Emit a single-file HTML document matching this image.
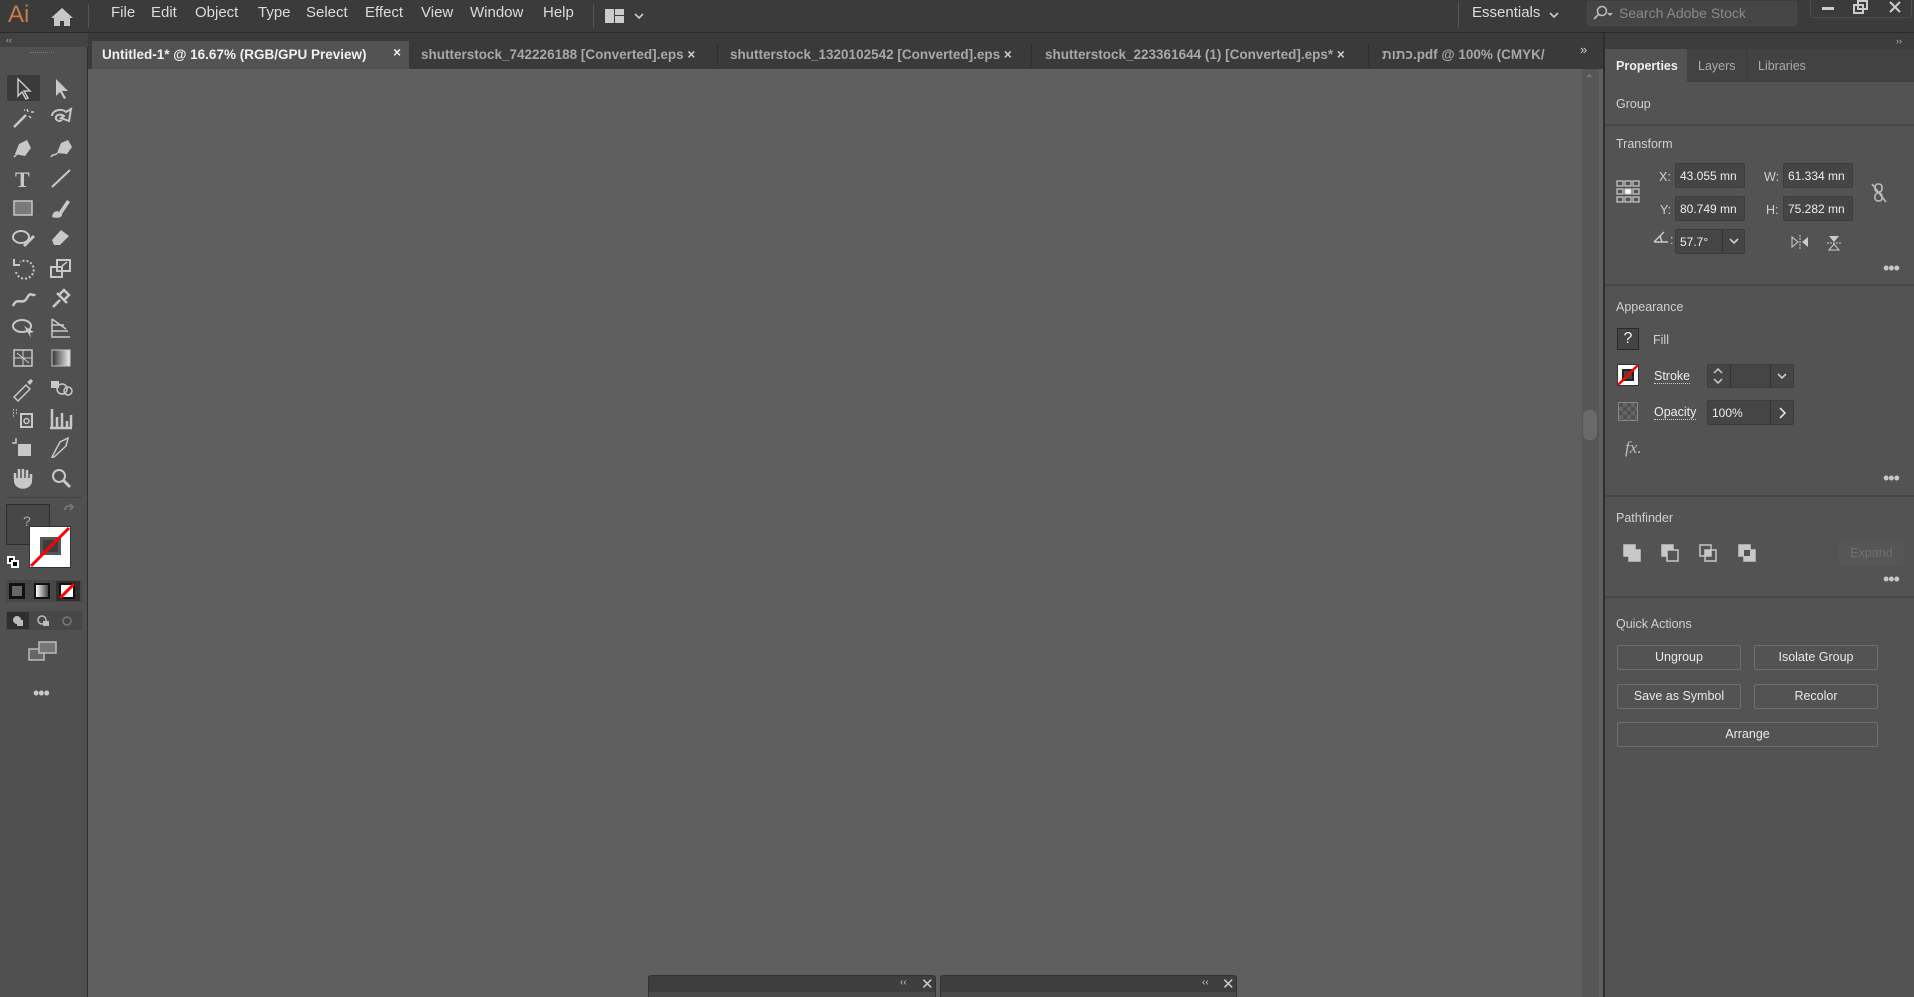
<!DOCTYPE html>
<html><head><meta charset="utf-8"><style>
*{margin:0;padding:0;box-sizing:border-box}
body{width:1914px;height:997px;overflow:hidden;background:#5f5f5f;font-family:"Liberation Sans",sans-serif;position:relative;color:#d6d6d6}
.a{position:absolute}
.menu{left:0;top:0;width:1914px;height:33px;background:#3b3b3b;border-bottom:1px solid #2a2a2a}
.mi{top:4px;font-size:15px;color:#dcdcdc}
.tb{left:0;top:33px;width:88px;height:964px;background:#505050;border-right:1px solid #2e2e2e}
.tabs{left:88px;top:33px;width:1515px;height:36px;background:#3a3a3a}
.tab{top:41px;height:28px;font-size:13.5px;font-weight:bold;color:#a8a8a8;padding:6px 10px;white-space:nowrap}
.rp{left:1603px;top:33px;width:311px;height:964px;background:#535353;border-left:2px solid #2e2e2e}
.lbl{font-size:12.5px;color:#d0d0d0;white-space:nowrap}
.fld{background:#454545;border:1px solid #3c3c3c;border-radius:2px;font-size:12px;color:#eee;padding:5px 4px;white-space:nowrap;overflow:hidden;line-height:14px}
.btn{border:1px solid #6e6e6e;border-radius:2px;font-size:12.5px;color:#e8e8e8;text-align:center;line-height:23px}
.div{left:1605px;width:309px;height:2px;background:#474747}
.dots{font-size:18px;color:#c8c8c8;letter-spacing:-1px;line-height:10px}
</style></head><body>
<div class="a menu"></div>
<div class="a" style="left:8px;top:1px;font-size:24px;color:#c97a4a">Ai</div>
<svg class="a" style="left:50px;top:7px" width="24" height="20" viewBox="0 0 24 20"><path d="M12 1L1 11h3v8h6v-5h4v5h6v-8h3z" fill="#c8c8c8"/></svg>
<div class="a" style="left:88px;top:4px;width:1px;height:24px;background:#555"></div>
<div class="a mi" style="left:111px">File</div><div class="a mi" style="left:151px">Edit</div><div class="a mi" style="left:195px">Object</div><div class="a mi" style="left:258px">Type</div><div class="a mi" style="left:306px">Select</div><div class="a mi" style="left:365px">Effect</div><div class="a mi" style="left:421px">View</div><div class="a mi" style="left:470px">Window</div><div class="a mi" style="left:543px">Help</div>
<div class="a" style="left:593px;top:4px;width:1px;height:24px;background:#555"></div>
<svg class="a" style="left:604px;top:7px" width="42" height="18"><rect x="1" y="2" width="9" height="14" fill="#ccc"/><rect x="11" y="2" width="9" height="6" fill="#ccc"/><rect x="11" y="9" width="9" height="7" fill="#ccc"/><path d="M31 7l4 4 4-4" stroke="#ccc" fill="none" stroke-width="1.6"/></svg>
<div class="a" style="left:1458px;top:2px;width:1px;height:26px;background:#555"></div>
<div class="a mi" style="left:1472px">Essentials</div>
<svg class="a" style="left:1548px;top:10px" width="12" height="10"><path d="M2 3l4 4 4-4" stroke="#ccc" fill="none" stroke-width="1.6"/></svg>
<div class="a" style="left:1587px;top:1px;width:210px;height:25px;background:#454545;border-radius:3px;border:1px solid #4a4a4a"></div>
<svg class="a" style="left:1592px;top:5px" width="22" height="16"><circle cx="10" cy="6" r="4.5" stroke="#bbb" fill="none" stroke-width="1.6"/><path d="M7 9l-5 5" stroke="#bbb" stroke-width="1.8"/><path d="M15 8l3 3 3-3z" fill="#bbb"/></svg>
<div class="a" style="left:1619px;top:5px;font-size:14px;color:#8a8a8a">Search Adobe Stock</div>
<div class="a" style="left:1810px;top:0;width:102px;height:18px;border:1px solid #4e4e4e;border-top:none;border-radius:0 0 4px 4px"></div>
<div class="a" style="left:1822px;top:7px;width:12px;height:3px;background:#ccc"></div>
<svg class="a" style="left:1853px;top:0" width="16" height="14"><rect x="1" y="5" width="9" height="8" stroke="#ccc" fill="none" stroke-width="2"/><rect x="5" y="1" width="9" height="8" stroke="#ccc" fill="none" stroke-width="2"/></svg>
<svg class="a" style="left:1888px;top:1px" width="14" height="12"><path d="M2 1l10 10M12 1L2 11" stroke="#ccc" stroke-width="2"/></svg>

<div class="a tb"></div>
<div class="a" style="left:0;top:33px;width:88px;height:14px;background:#424242"></div>
<div class="a" style="left:6px;top:35px;font-size:9px;color:#aaa">‹‹</div>
<div class="a" style="left:30px;top:52px;width:24px;height:3px;border-top:1px dotted #777"></div>
<div class="a" style="left:7px;top:75px;width:33px;height:26px;background:#3a3a3a;border-radius:2px"></div>
<svg class="a" style="left:0;top:0" width="88" height="500" fill="#c8c8c8" stroke="#c8c8c8">
<g transform="translate(23,88)"><path d="M-5-9v17l4-4 4 7 2-1-4-7h6z" fill="none" stroke-width="1.5"/></g>
<g transform="translate(61,88)"><path d="M-5-9v17l4-4 4 7 2-1-4-7h6z" stroke="none"/></g>
<g transform="translate(23,118)"><path d="M-9 9l12-12" stroke-width="2.5" fill="none"/><path d="M4-9l1 3M8-6l3 0M6-2l2 2M1-8h1" stroke-width="1.5"/></g>
<g transform="translate(61,118)"><path d="M-9-2c0-6 10-8 14-4l5-3-2 12-8-3 3-2c-2-2-7-2-8 1s3 5 6 3" fill="none" stroke-width="2"/></g>
<g transform="translate(23,148)"><path d="M-8 6l4-10 8-4 4 8-6 8z M-9 9l4-4" stroke="none"/><path d="M-9 9l5-5" stroke-width="1.5"/></g>
<g transform="translate(61,148)"><path d="M-4 5l4-10 7-3 4 7-5 7z" stroke="none"/><path d="M-10 9c2-4 5-1 6-4" fill="none" stroke-width="1.5"/></g>
<g transform="translate(23,178)"><text x="-8" y="9" font-size="22" font-weight="bold" font-family="Liberation Serif" stroke="none">T</text></g>
<g transform="translate(61,178)"><path d="M-9 9l18-17" stroke-width="2" fill="none"/></g>
<g transform="translate(23,208)"><rect x="-9" y="-7" width="18" height="14" fill="#7a7a7a" stroke-width="1.5"/></g>
<g transform="translate(61,208)"><path d="M-9 9c1-6 5-7 7-5l8-12 3 2-8 12c1 3-4 5-10 3z" stroke="none"/></g>
<g transform="translate(23,238)"><ellipse cx="-2" cy="-1" rx="8" ry="6" fill="none" stroke-width="2"/><path d="M1 8l10-10" stroke-width="3"/></g>
<g transform="translate(61,238)"><path d="M-9 2l9-10 8 6-9 9h-6z" stroke="none"/></g>
<g transform="translate(23,268)"><path d="M-7 4a9 9 0 1 0 4-10" fill="none" stroke-width="2" stroke-dasharray="2 2"/><path d="M-9-9v6h6" fill="none" stroke-width="2"/></g>
<g transform="translate(61,268)"><rect x="-10" y="-1" width="11" height="10" fill="none" stroke-width="2"/><rect x="-4" y="-8" width="13" height="11" fill="none" stroke-width="2"/><path d="M1-2l5-4" stroke-width="1.5"/></g>
<g transform="translate(23,298)"><path d="M-10 8c4-10 10 0 14-8s6 0 8-4" fill="none" stroke-width="2.5"/></g>
<g transform="translate(61,298)"><path d="M-8 9l7-7m-3-7l10 10m-8-8l5-5 5 5-5 5" stroke-width="2.5" fill="none"/></g>
<g transform="translate(23,328)"><ellipse cx="-1" cy="-2" rx="9" ry="6" fill="none" stroke-width="2"/><path d="M1-2l10 6-4 1 1 5z" stroke="none"/></g>
<g transform="translate(61,328)"><path d="M-9-9v18h18M-9-9l14 10M-9-3h12M-9 3h16" fill="none" stroke-width="1.5"/></g>
<g transform="translate(23,358)"><rect x="-9" y="-8" width="18" height="16" fill="none" stroke-width="1.5"/><path d="M-9 0h18M0-8v16M-6-5l12 10" fill="none" stroke-width="1"/></g>
<defs><linearGradient id="g"><stop offset="0" stop-color="#333"/><stop offset="1" stop-color="#eee"/></linearGradient></defs>
<g transform="translate(61,358)"><rect x="-9" y="-8" width="18" height="16" fill="url(#g)" stroke-width="1"/></g>
<g transform="translate(23,388)"><path d="M-9 9l12-12 4 4-12 12z" fill="none" stroke-width="1.5"/><path d="M4-6l4-3 2 2-3 4z" stroke="none"/></g>
<g transform="translate(61,388)"><rect x="-10" y="-7" width="8" height="7" stroke="none"/><circle cx="1" cy="1" r="5" fill="none" stroke-width="1.5"/><circle cx="7" cy="3" r="4" fill="none" stroke-width="1.5"/></g>
<g transform="translate(23,418)"><rect x="-2" y="-4" width="11" height="13" fill="none" stroke-width="2"/><circle cx="3.5" cy="3" r="2.5" fill="none" stroke-width="1.5"/><path d="M-10-8h1M-7-8h1M-10-5h1M-7-5h1M-10-2h1" stroke-width="1.5"/></g>
<g transform="translate(61,418)"><path d="M-9 9v-18M-4 9v-10M1 9v-14M6 9v-6M10 9v-12M-11 10h22" stroke-width="2.5" fill="none"/></g>
<g transform="translate(23,448)"><path d="M-7-10v5h-4" fill="none" stroke-width="1.5"/><path d="M-5-4h13v12h-13z" stroke="none"/></g>
<g transform="translate(61,448)"><path d="M-9 9l8-15 8-4-2 8-12 11z" fill="none" stroke-width="1.5"/></g>
<g transform="translate(23,478)"><path d="M-9 0h18v4c-2 9-16 9-18 0z" stroke="none"/><path d="M-8 1v-6M-4 0v-9M0 0v-9M4 0v-8M8 1v-5" stroke-width="2.5" fill="none"/></g>
<g transform="translate(61,478)"><circle cx="-2" cy="-2" r="6" fill="none" stroke-width="2"/><path d="M2 2l7 7" stroke-width="3"/></g>
</svg>
<div class="a" style="left:6px;top:497px;width:76px;height:1px;background:#444"></div>
<div class="a" style="left:6px;top:504px;width:44px;height:41px;background:#474747;border:1px solid #2e2e2e"></div>
<div class="a" style="left:23px;top:513px;font-size:14px;color:#9ab">?</div>
<div class="a" style="left:29px;top:526px;width:42px;height:42px;background:#fff;border:1px solid #333"></div>
<div class="a" style="left:40px;top:537px;width:21px;height:18px;background:#3d3d3d;border:3px solid #555"></div>
<svg class="a" style="left:29px;top:526px" width="42" height="42"><path d="M2 40L40 2" stroke="#f00" stroke-width="3"/></svg>
<svg class="a" style="left:62px;top:503px" width="14" height="12"><path d="M3 7c0-4 4-5 8-3M8 1l3 3-3 3" stroke="#777" fill="none" stroke-width="1.8"/></svg>
<div class="a" style="left:7px;top:556px;width:8px;height:8px;border:2px solid #fff;background:#000"></div>
<div class="a" style="left:11px;top:560px;width:8px;height:8px;border:2px solid #fff;background:#000"></div>
<div class="a" style="left:6px;top:580px;width:76px;height:22px;background:#474747;border-radius:2px"></div>
<div class="a" style="left:9px;top:583px;width:16px;height:16px;border:3px solid #111;background:#666"></div>
<div class="a" style="left:34px;top:583px;width:16px;height:16px;border:2px solid #111;background:linear-gradient(90deg,#fff,#444)"></div>
<div class="a" style="left:56px;top:581px;width:24px;height:20px;background:#2f2f2f"></div>
<div class="a" style="left:59px;top:583px;width:16px;height:16px;border:2px solid #111;background:#fff"></div>
<svg class="a" style="left:59px;top:583px" width="16" height="16"><path d="M1 15L15 1" stroke="#f00" stroke-width="3"/></svg>
<div class="a" style="left:6px;top:611px;width:76px;height:19px;background:#474747;border-radius:2px"></div>
<div class="a" style="left:7px;top:612px;width:22px;height:17px;background:#2f2f2f"></div>
<svg class="a" style="left:8px;top:612px" width="75" height="18" fill="#bbb"><circle cx="9" cy="8" r="4"/><rect x="9" y="8" width="6" height="6"/><circle cx="34" cy="8" r="4" fill="none" stroke="#bbb" stroke-width="1.5"/><rect x="35" y="9" width="6" height="5"/><circle cx="59" cy="9" r="4" fill="none" stroke="#777" stroke-width="1.5"/></svg>
<svg class="a" style="left:27px;top:640px" width="32" height="22"><rect x="2" y="9" width="15" height="11" fill="#666" stroke="#bbb" stroke-width="1.5"/><rect x="12" y="2" width="17" height="11" fill="#777" stroke="#bbb" stroke-width="1.5"/></svg>
<div class="a dots" style="left:33px;top:688px">•••</div>

<div class="a tabs"></div>
<div class="a tab" style="left:92px;width:317px;background:#535353;color:#f0f0f0">Untitled-1* @ 16.67% (RGB/GPU Preview)<span style="position:absolute;right:8px;top:4px">×</span></div>
<div class="a tab" style="left:411px">shutterstock_742226188 [Converted].eps <span style="color:#ccc">×</span></div>
<div class="a" style="left:717px;top:44px;width:1px;height:22px;background:#2c2c2c"></div>
<div class="a tab" style="left:720px">shutterstock_1320102542 [Converted].eps <span style="color:#ccc">×</span></div>
<div class="a" style="left:1031px;top:44px;width:1px;height:22px;background:#2c2c2c"></div>
<div class="a tab" style="left:1035px">shutterstock_223361644 (1) [Converted].eps* <span style="color:#ccc">×</span></div>
<div class="a" style="left:1368px;top:44px;width:1px;height:22px;background:#2c2c2c"></div>
<div class="a tab" style="left:1372px;width:190px;overflow:hidden;font-family:'Liberation Sans','Noto Sans CJK SC',sans-serif">כתות.pdf @ 100% (CMYK/</div>
<div class="a" style="left:1580px;top:42px;font-size:13px;color:#ccc">»</div>
<div class="a" style="left:1582px;top:69px;width:17px;height:928px;background:#565656"></div>
<div class="a" style="left:1583px;top:410px;width:14px;height:30px;background:#6a6a6a;border-radius:6px"></div>
<div class="a" style="left:1585px;top:74px;font-size:10px;color:#999">⌃</div>

<div class="a" style="left:648px;top:975px;width:288px;height:22px;background:#3e3e3e;border-radius:3px 3px 0 0;border:1px solid #333"></div>
<div class="a" style="left:940px;top:975px;width:297px;height:22px;background:#3e3e3e;border-radius:3px 3px 0 0;border:1px solid #333"></div>
<div class="a" style="left:900px;top:977px;font-size:10px;color:#ccc">‹‹</div><div class="a" style="left:921px;top:975px;font-size:15px;color:#ccc">✕</div>
<div class="a" style="left:1202px;top:977px;font-size:10px;color:#ccc">‹‹</div><div class="a" style="left:1222px;top:975px;font-size:15px;color:#ccc">✕</div>
<div class="a" style="left:649px;top:992px;width:286px;height:5px;background:#4a4a4a"></div>
<div class="a" style="left:941px;top:992px;width:295px;height:5px;background:#4a4a4a"></div>

<div class="a rp"></div>
<div class="a" style="left:1605px;top:33px;width:309px;height:16px;background:#3c3c3c"></div>
<div class="a" style="left:1896px;top:36px;font-size:9px;color:#bbb">››</div>
<div class="a" style="left:1605px;top:49px;width:309px;height:33px;background:#424242"></div>
<div class="a" style="left:1605px;top:49px;width:82px;height:33px;background:#535353"></div>
<div class="a lbl" style="left:1616px;top:59px;font-weight:bold;color:#eee">Properties</div>
<div class="a lbl" style="left:1698px;top:59px;color:#aaa">Layers</div>
<div class="a" style="left:1746px;top:49px;width:1px;height:33px;background:#3a3a3a"></div>
<div class="a lbl" style="left:1758px;top:59px;color:#aaa">Libraries</div>
<div class="a lbl" style="left:1616px;top:97px">Group</div>
<div class="a div" style="top:124px"></div>
<div class="a lbl" style="left:1616px;top:137px">Transform</div>
<svg class="a" style="left:1616px;top:180px" width="26" height="24" fill="none" stroke="#ccc" stroke-width="1.2"><rect x="1" y="1" width="6" height="5"/><rect x="9" y="1" width="6" height="5"/><rect x="17" y="1" width="6" height="5"/><rect x="1" y="9" width="6" height="5"/><rect x="9" y="9" width="6" height="5" fill="#fff"/><rect x="17" y="9" width="6" height="5"/><rect x="1" y="17" width="6" height="5"/><rect x="9" y="17" width="6" height="5"/><rect x="17" y="17" width="6" height="5"/></svg>
<div class="a lbl" style="left:1659px;top:170px">X:</div>
<div class="a fld" style="left:1675px;top:163px;width:70px;height:25px">43.055 mn</div>
<div class="a lbl" style="left:1764px;top:170px">W:</div>
<div class="a fld" style="left:1783px;top:163px;width:70px;height:25px">61.334 mn</div>
<div class="a lbl" style="left:1660px;top:203px">Y:</div>
<div class="a fld" style="left:1675px;top:196px;width:70px;height:25px">80.749 mn</div>
<div class="a lbl" style="left:1766px;top:203px">H:</div>
<div class="a fld" style="left:1783px;top:196px;width:70px;height:25px">75.282 mn</div>
<svg class="a" style="left:1870px;top:182px" width="18" height="22" fill="none" stroke="#bbb" stroke-width="1.6"><rect x="5" y="2" width="7" height="8" rx="3"/><rect x="5" y="11" width="7" height="8" rx="3"/><path d="M2 2l14 18"/></svg>
<svg class="a" style="left:1652px;top:230px" width="20" height="14" fill="none" stroke="#ccc" stroke-width="1.4"><path d="M2 12h14M2 12l10-10M8 6l2 6"/></svg>
<div class="a lbl" style="left:1670px;top:233px">:</div>
<div class="a fld" style="left:1675px;top:229px;width:70px;height:25px">57.7°</div>
<div class="a" style="left:1722px;top:230px;width:1px;height:23px;background:#333"></div>
<svg class="a" style="left:1728px;top:236px" width="12" height="10"><path d="M2 3l4 4 4-4" stroke="#ccc" fill="none" stroke-width="1.6"/></svg>
<svg class="a" style="left:1790px;top:234px" width="20" height="16" fill="#ccc"><path d="M2 3l6 5-6 5z" fill="none" stroke="#ccc"/><path d="M18 3l-6 5 6 5z"/><path d="M10 1v14" stroke="#ccc" stroke-dasharray="2 1"/></svg>
<svg class="a" style="left:1826px;top:234px" width="16" height="18" fill="#ccc"><path d="M3 2h10l-5 6z"/><path d="M3 16h10l-5-6z" fill="none" stroke="#ccc"/><path d="M1 9h14" stroke="#ccc" stroke-dasharray="2 1"/></svg>
<div class="a dots" style="left:1883px;top:263px">•••</div>
<div class="a div" style="top:284px"></div>
<div class="a lbl" style="left:1616px;top:300px">Appearance</div>
<div class="a" style="left:1617px;top:328px;width:22px;height:22px;border:1px solid #2a2a2a;background:#444;color:#eee;font-size:16px;text-align:center;line-height:20px">?</div>
<div class="a lbl" style="left:1653px;top:333px">Fill</div>
<div class="a" style="left:1617px;top:364px;width:22px;height:22px;background:#fff;border:1px solid #333"></div>
<div class="a" style="left:1622px;top:369px;width:12px;height:12px;background:#444;border:2px solid #222"></div>
<svg class="a" style="left:1617px;top:364px" width="22" height="22"><path d="M1 21L21 1" stroke="#f00" stroke-width="2.5"/></svg>
<div class="a lbl" style="left:1654px;top:370px;color:#eee;border-bottom:1px dotted #ccc;line-height:13px">Stroke</div>
<div class="a fld" style="left:1707px;top:364px;width:87px;height:24px"></div>
<div class="a" style="left:1730px;top:365px;width:1px;height:22px;background:#333"></div>
<div class="a" style="left:1770px;top:365px;width:1px;height:22px;background:#333"></div>
<svg class="a" style="left:1711px;top:366px" width="14" height="20" fill="none" stroke="#ccc" stroke-width="1.5"><path d="M3 7l4-4 4 4M3 13l4 4 4-4"/></svg>
<svg class="a" style="left:1776px;top:371px" width="12" height="10"><path d="M2 3l4 4 4-4" stroke="#ccc" fill="none" stroke-width="1.6"/></svg>
<div class="a" style="left:1618px;top:402px;width:20px;height:19px;border:1px solid #888;background:repeating-conic-gradient(#666 0 25%,#505050 0 50%) 0 0/8px 8px"></div>
<div class="a lbl" style="left:1654px;top:406px;color:#eee;border-bottom:1px dotted #ccc;line-height:13px">Opacity</div>
<div class="a fld" style="left:1707px;top:400px;width:87px;height:25px">100%</div>
<div class="a" style="left:1770px;top:401px;width:1px;height:23px;background:#333"></div>
<svg class="a" style="left:1777px;top:406px" width="10" height="14"><path d="M3 2l5 5-5 5" stroke="#ddd" fill="none" stroke-width="1.6"/></svg>
<div class="a" style="left:1625px;top:438px;font-size:17px;font-style:italic;color:#bbb;font-family:'Liberation Serif',serif">fx.</div>
<div class="a dots" style="left:1883px;top:473px">•••</div>
<div class="a div" style="top:495px"></div>
<div class="a lbl" style="left:1616px;top:511px">Pathfinder</div>
<svg class="a" style="left:1622px;top:543px" width="150" height="22" fill="#c8c8c8" stroke="#c8c8c8" stroke-width="1.5">
<rect x="2" y="2" width="11" height="11"/><rect x="7" y="7" width="11" height="11"/>
<rect x="40" y="2" width="11" height="11"/><rect x="45" y="7" width="11" height="11" fill="#535353"/>
<rect x="78" y="2" width="11" height="11" fill="none"/><rect x="83" y="7" width="11" height="11" fill="none"/><rect x="83" y="7" width="6" height="6" stroke="none"/>
<rect x="117" y="2" width="11" height="11"/><rect x="122" y="7" width="11" height="11"/><rect x="122" y="7" width="6" height="6" fill="#535353" stroke="none"/>
</svg>
<div class="a" style="left:1839px;top:540px;width:65px;height:26px;background:#565656;border-radius:2px;font-size:12.5px;color:#707070;text-align:center;line-height:26px">Expand</div>
<div class="a dots" style="left:1883px;top:574px">•••</div>
<div class="a div" style="top:596px"></div>
<div class="a lbl" style="left:1616px;top:617px">Quick Actions</div>
<div class="a btn" style="left:1617px;top:645px;width:124px;height:25px">Ungroup</div>
<div class="a btn" style="left:1754px;top:645px;width:124px;height:25px">Isolate Group</div>
<div class="a btn" style="left:1617px;top:684px;width:124px;height:25px">Save as Symbol</div>
<div class="a btn" style="left:1754px;top:684px;width:124px;height:25px">Recolor</div>
<div class="a btn" style="left:1617px;top:722px;width:261px;height:25px">Arrange</div>
</body></html>
